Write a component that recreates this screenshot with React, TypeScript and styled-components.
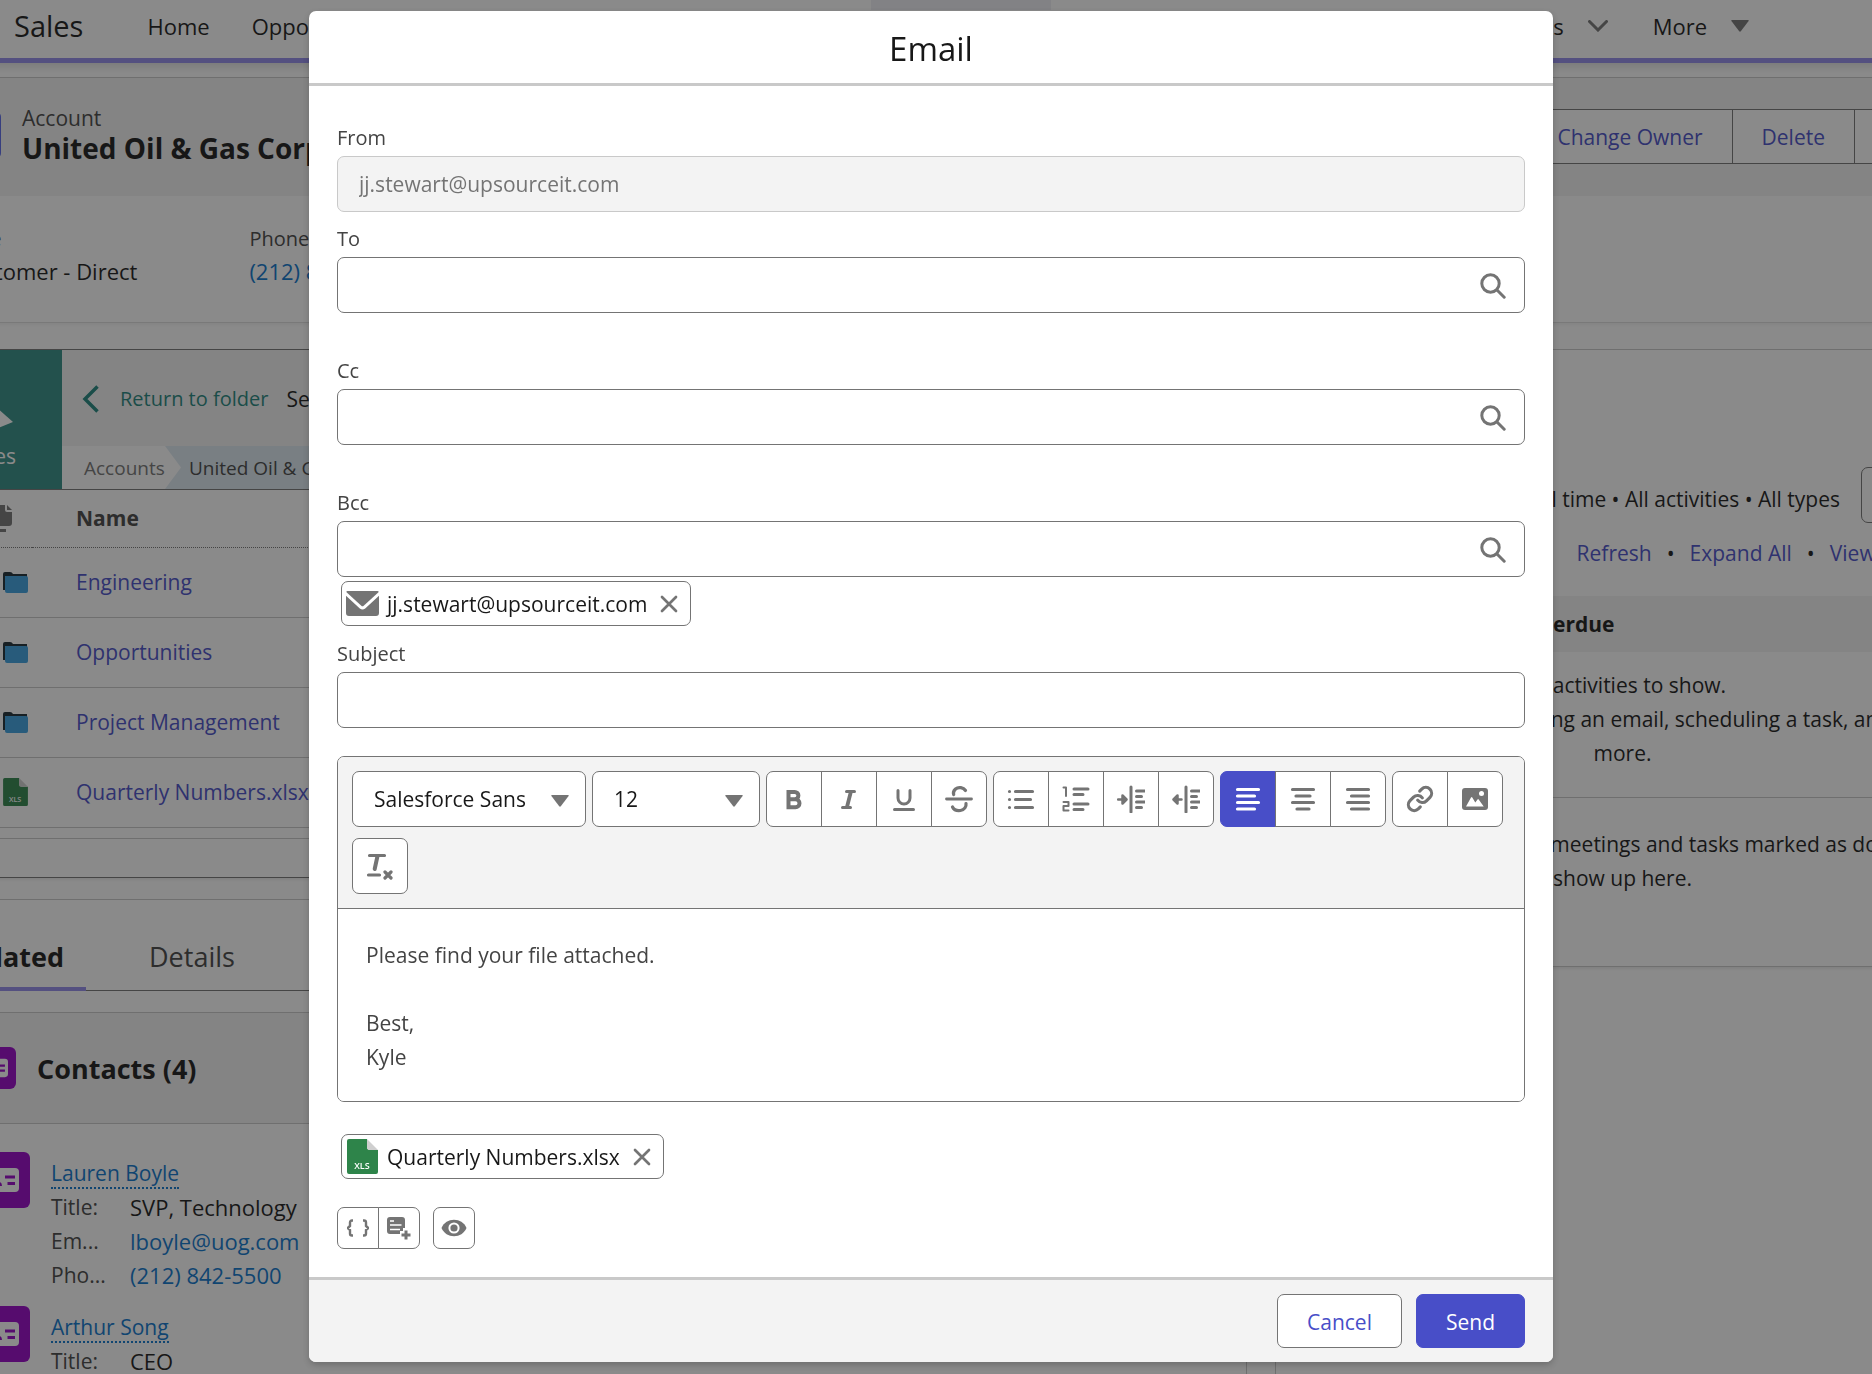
import React, { useState } from 'react';
import styled, { createGlobalStyle } from 'styled-components';
import { Link as LinkIcon } from 'lucide-react';

const font = `"Open Sans", "Noto Sans", sans-serif`;
const ink = '#181818';
const muted = '#444444';
const gray = '#747474';
const brand = '#484ec8';
const link = '#0b74cc';
const panel = '#f3f3f3';
const rule = '#c9c9c9';

const GlobalStyle = createGlobalStyle`
  *, *::before, *::after { box-sizing: border-box; }
  body {
    margin: 0;
    overflow: hidden;
    background: #fff;
    color: ${ink};
    font-family: ${font};
    font-size: 21px;
    line-height: 34px;
  }
  button, input, select, textarea { font: inherit; color: inherit; margin: 0; }
  h1, h2, p, dl, dd, dt { margin: 0; }
  a { text-decoration: none; }
  svg { display: block; flex: none; }
`;

/* ---------- record page behind the dialog ---------- */

const Viewport = styled.div`
  height: 100vh;
  overflow: hidden;
`;

const Page = styled.div`
  display: flex;
  flex-direction: column;
  min-height: 100vh;
  margin: 0 -97px 0 -60px;
`;

const TopNav = styled.nav`
  display: grid;
  grid-template-columns: minmax(0, 871fr) 180px minmax(0, 821fr);
  height: 63px;
  padding: 0 97px 0 60px;
  border-bottom: 5px solid #928aea;
  box-shadow: 0 4px 8px rgba(0, 0, 0, 0.12);
  font-size: 22px;
  white-space: nowrap;
`;

const NavStart = styled.div`
  display: flex;
  align-items: center;
  padding: 0 0 6px 14px;
  overflow: hidden;
`;

const NavEnd = styled(NavStart)`
  justify-content: flex-end;
  padding: 0 123px 6px 0;
`;

const SearchEdge = styled.div`
  height: 10px;
  background: #efeff4;
`;

const AppName = styled.span`
  font-size: 29px;
  margin-right: 64px;
`;

const NavLink = styled.a<{ $gap: number }>`
  display: flex;
  align-items: center;
  gap: 24px;
  color: ${ink};
  margin-right: ${(p) => p.$gap}px;
`;

const RecordHeader = styled.header`
  display: flex;
  align-items: flex-start;
  height: 119px;
  margin-top: 14px;
  padding: 29px 28px 0 13px;
  background: ${panel};
  border-top: 1px solid ${rule};
  white-space: nowrap;
`;

const AccountMark = styled.div`
  width: 48px;
  height: 48px;
  margin: 4px 21px 0 0;
  border-radius: 6px;
  background: #5867e8;
`;

const RecordTitle = styled.div`
  flex: 1;
`;

const Eyebrow = styled.div`
  color: ${muted};
  line-height: 22px;
`;

const RecordName = styled.h1`
  font-size: 28px;
  line-height: 38px;
  font-weight: 700;
`;

const HeaderActions = styled.div`
  display: flex;
  padding-top: 2px;
`;

const HeaderButton = styled.button<{ $width?: number }>`
  height: 55px;
  width: ${(p) => (p.$width ? `${p.$width}px` : 'auto')};
  margin-left: -1px;
  padding: 0 29px;
  background: #fff;
  border: 1px solid ${gray};
  color: ${brand};
`;

const Highlights = styled.dl`
  display: flex;
  gap: 112px;
  height: 127px;
  padding: 26px 0 0 17px;
  border-bottom: 1px solid #dcdcdc;
  box-shadow: 0 2px 3px rgba(0, 0, 0, 0.05);
  white-space: nowrap;
`;

const FieldName = styled.dt`
  font-size: 20px;
  color: ${muted};
`;

const FieldValue = styled.dd`
  line-height: 30px;
  font-size: 22px;
`;

const BlueLink = styled.a`
  color: ${link};
`;

const BrandLink = styled.a`
  color: ${brand};
`;

const Columns = styled.div`
  display: grid;
  grid-template-columns: minmax(0, 1307px) minmax(0, 1fr);
  column-gap: 28px;
  flex: 1;
  padding-top: 26px;
`;

const MainColumn = styled.main`
  border-right: 1px solid ${rule};
`;

const SideColumn = styled.aside`
  border-left: 1px solid ${rule};
`;

const FilesCard = styled.section`
  height: 529px;
  border-top: 1px solid ${gray};
  border-bottom: 1px solid ${gray};
  box-shadow: 0 2px 3px rgba(0, 0, 0, 0.08);
`;

const FilesTop = styled.div`
  display: flex;
  height: 140px;
  border-bottom: 1px solid ${gray};
`;

const FilesBadge = styled.div`
  display: flex;
  flex-direction: column;
  align-items: flex-end;
  justify-content: flex-end;
  width: 122px;
  padding: 0 46px 16px 0;
  background: #308c84;
  color: #fff;
`;

const FilesHead = styled.div`
  flex: 1;
  display: flex;
  flex-direction: column;
`;

const FilesPath = styled.div`
  display: flex;
  align-items: center;
  flex: 1;
  padding: 2px 0 0 20px;
  background: ${panel};
  white-space: nowrap;
`;

const ReturnLink = styled.a`
  display: flex;
  align-items: center;
  gap: 21px;
  margin-right: 18px;
  font-size: 20px;
  color: #1f857c;
`;

const Crumbs = styled.div`
  display: flex;
  height: 43px;
  overflow: hidden;
  background: #dde9f0;
  font-size: 19px;
  line-height: 45px;
  white-space: nowrap;
`;

const FirstCrumb = styled.a`
  width: 119px;
  padding-left: 22px;
  color: ${gray};
  background: #fff;
  clip-path: polygon(0 0, 103px 0, 100% 50%, 103px 100%, 0 100%);
`;

const Crumb = styled.a`
  padding-left: 8px;
  color: ${muted};
`;

const FileTable = styled.table`
  width: 100%;
  border-collapse: collapse;
  table-layout: fixed;
  text-align: left;
`;

const FileHeadCell = styled.th`
  height: 57px;
  padding: 0 0 0 44px;
  border-bottom: 1px dotted ${gray};
  color: ${muted};
`;

const FileCell = styled.td<{ $icon?: boolean }>`
  height: 70px;
  padding: 0 0 0 ${(p) => (p.$icon ? 63 : 44)}px;
  border-bottom: 1px solid ${rule};
  white-space: nowrap;
`;

const FileCol = styled.col<{ $w?: number }>`
  width: ${(p) => (p.$w ? `${p.$w}px` : 'auto')};
`;

const FilesFoot = styled.div`
  height: 11px;
  border-bottom: 1px solid ${rule};
`;

const TabsCard = styled.section`
  margin-top: 21px;
  border-top: 1px solid ${rule};
`;

const Tabs = styled.div`
  display: flex;
  height: 91px;
  margin-bottom: 21px;
  border-bottom: 1px solid ${gray};
`;

const Tab = styled.button<{ $active?: boolean }>`
  height: 91px;
  width: ${(p) => (p.$active ? 146 : 210)}px;
  padding: ${(p) => (p.$active ? '26px 22px 0 0' : '26px 0 0 63px')};
  border: 0;
  border-bottom: 4px solid ${(p) => (p.$active ? '#928aea' : 'transparent')};
  background: none;
  text-align: ${(p) => (p.$active ? 'right' : 'left')};
  font-size: 27px;
  font-weight: ${(p) => (p.$active ? 700 : 400)};
  color: ${(p) => (p.$active ? ink : muted)};
`;

const RelatedHead = styled.div`
  display: flex;
  align-items: center;
  gap: 21px;
  height: 112px;
  padding-left: 34px;
  background: ${panel};
  border-top: 1px solid ${rule};
  border-bottom: 1px solid ${rule};
`;

const RelatedTitle = styled.h2`
  padding-top: 2px;
  font-size: 27px;
  font-weight: 700;
`;

const ContactIconBox = styled.span<{ $size: number }>`
  display: flex;
  align-items: center;
  justify-content: center;
  flex: none;
  width: ${(p) => p.$size}px;
  height: ${(p) => p.$size}px;
  border-radius: 6px;
  background: #9602c7;
`;

const ContactRow = styled.article`
  display: flex;
  align-items: flex-start;
  gap: 21px;
  height: 154px;
  padding: 28px 0 0 34px;
`;

const ContactBody = styled.div`
  padding-top: 4px;
`;

const ContactName = styled.a`
  display: inline-block;
  line-height: 28px;
  color: ${link};
  border-bottom: 2px dotted ${link};
`;

const ContactGrid = styled.dl`
  display: grid;
  grid-template-columns: 79px auto;
`;

const ContactKey = styled.dt`
  color: ${muted};
`;

const ContactValue = styled.dd`
  font-size: 22px;
`;

const ActivityCard = styled.section`
  height: 618px;
  border-top: 1px solid ${rule};
  border-bottom: 1px solid ${rule};
  box-shadow: 0 2px 3px rgba(0, 0, 0, 0.08);
  white-space: nowrap;
`;

const FilterRow = styled.div`
  display: flex;
  align-items: center;
  justify-content: flex-end;
  gap: 21px;
  padding: 117px 52px 0 0;
`;

const FilterText = styled.span`
  padding-top: 8px;
`;

const GearButton = styled.button`
  width: 56px;
  height: 56px;
  background: #fff;
  border: 1px solid ${gray};
  border-radius: 7px;
`;

const ActivityLinks = styled.div`
  display: flex;
  justify-content: flex-end;
  gap: 15px;
  padding: 13px 64px 26px 0;
`;

const SectionBand = styled.h2`
  height: 56px;
  padding-left: 116px;
  background: ${panel};
  font-size: 21px;
  line-height: 56px;
  font-weight: 700;
`;

const EmptyNote = styled.p<{ $top: number; $bottom: number }>`
  padding: ${(p) => p.$top}px 0 ${(p) => p.$bottom}px;
  text-align: center;
`;

const Divider = styled.div`
  border-top: 1px solid ${rule};
`;

/* ---------- dialog ---------- */

const Overlay = styled.div`
  position: fixed;
  inset: 0;
  display: flex;
  padding: 11px 319px 12px 309px;
  background: rgba(22, 22, 22, 0.5);
`;

const Dialog = styled.form`
  flex: 1;
  min-width: 0;
  display: flex;
  flex-direction: column;
  border-radius: 7px;
  background: #fff;
  box-shadow: 0 3px 6px rgba(0, 0, 0, 0.2);
`;

const DialogTitle = styled.h1`
  padding: 16px 0 12px;
  border-bottom: 3px solid ${rule};
  font-size: 33px;
  line-height: 44px;
  font-weight: 400;
  text-align: center;
`;

const DialogBody = styled.div`
  flex: 1;
  padding: 38px 28px 28px;
`;

const DialogFooter = styled.div`
  display: flex;
  justify-content: flex-end;
  gap: 14px;
  padding: 14px 28px;
  border-top: 3px solid ${rule};
  border-radius: 0 0 7px 7px;
  background: ${panel};
`;

const ActionButton = styled.button<{ $primary?: boolean }>`
  height: 54px;
  padding: 2px 29px 0;
  border: 1px solid ${(p) => (p.$primary ? brand : gray)};
  border-radius: 7px;
  background: ${(p) => (p.$primary ? brand : '#fff')};
  color: ${(p) => (p.$primary ? '#fff' : brand)};
`;

const Field = styled.div<{ $after: number }>`
  display: flex;
  flex-direction: column;
  margin-bottom: ${(p) => p.$after}px;
`;

const Label = styled.label`
  align-self: flex-start;
  padding-bottom: 4px;
  font-size: 20px;
  line-height: 28px;
  color: ${muted};
`;

const InputBox = styled.div`
  display: grid;
  align-items: center;
  > * { grid-area: 1 / 1; }
  > svg { justify-self: end; margin: 2px 19px 0 0; pointer-events: none; }
`;

const TextInput = styled.input`
  width: 100%;
  height: 56px;
  padding: 0 21px;
  border: 1px solid ${gray};
  border-radius: 7px;
  background: #fff;
  &:disabled {
    background: ${panel};
    border-color: ${rule};
    color: ${gray};
  }
`;

const Pill = styled.div`
  display: flex;
  align-items: center;
  width: fit-content;
  height: 45px;
  margin-left: 4px;
  padding: 0 12px 0 4px;
  border: 1px solid ${gray};
  border-radius: 7px;
`;

const PillText = styled.span`
  margin: 0 13px 0 8px;
`;

const PillRemove = styled.button`
  padding: 0;
  border: 0;
  background: none;
`;

const BccPill = styled.div`
  padding: 4px 0 14px;
`;

const Editor = styled.div`
  overflow: hidden;
  border: 1px solid ${gray};
  border-radius: 7px;
`;

const Toolbar = styled.div`
  display: flex;
  flex-wrap: wrap;
  gap: 11px 6px;
  padding: 14px;
  border-bottom: 1px solid ${gray};
  background: ${panel};
`;

const SelectBox = styled(InputBox)<{ $width: number }>`
  width: ${(p) => p.$width}px;
  > svg { margin: 4px 17px 0 0; }
`;

const Select = styled.select`
  appearance: none;
  height: 56px;
  width: 100%;
  padding: 0 21px;
  border: 1px solid ${gray};
  border-radius: 7px;
  background: #fff;
`;

const ButtonGroup = styled.div`
  display: flex;
`;

const IconButton = styled.button<{ $size: number; $on?: boolean }>`
  display: flex;
  align-items: center;
  justify-content: center;
  width: ${(p) => p.$size}px;
  height: ${(p) => p.$size}px;
  padding: 0;
  border: 1px solid ${(p) => (p.$on ? brand : gray)};
  background: ${(p) => (p.$on ? brand : '#fff')};
  color: ${(p) => (p.$on ? '#fff' : gray)};
  &:not(:first-child) { margin-left: -1px; }
  &:first-child { border-radius: 7px 0 0 7px; }
  &:last-child { border-radius: 0 7px 7px 0; }
  &:only-child { border-radius: 7px; }
`;

const Message = styled.textarea`
  display: block;
  width: 100%;
  padding: 29px 28px 27px;
  border: 0;
  resize: none;
  color: ${muted};
  line-height: 34px;
`;

const Attachment = styled.div`
  padding: 32px 0 28px;
`;

const SmallTools = styled.div`
  display: flex;
  gap: 13px;
`;

/* ---------- icons ---------- */

const Glyph = ({ children }: { children: React.ReactNode }) => (
  <svg width="28" height="28" viewBox="0 0 28 28" fill="none" stroke="currentColor" strokeLinecap="round" strokeLinejoin="round" aria-hidden="true">
    {children}
  </svg>
);

const SearchIcon = () => (
  <svg width="26" height="26" viewBox="0 0 26 26" fill="none" stroke={gray} strokeWidth="3" strokeLinecap="round" aria-hidden="true">
    <circle cx="10.5" cy="10.5" r="8.7" />
    <path d="M17 17l7.2 7.2" />
  </svg>
);

const Triangle = () => (
  <svg width="18" height="12" viewBox="0 0 18 12" aria-hidden="true">
    <path d="M1 0h16q1.3 0 .6 1L10 11q-1 1.3-2 0L.4 1Q-.3 0 1 0z" fill={gray} />
  </svg>
);

const CrossIcon = () => (
  <svg width="18" height="18" viewBox="0 0 18 18" stroke={gray} strokeWidth="2.7" strokeLinecap="round" aria-hidden="true">
    <path d="M2 2l14 14M16 2L2 16" />
  </svg>
);

const MailIcon = () => (
  <svg width="33" height="25" viewBox="0 0 33 25" fill={gray} aria-hidden="true">
    <path d="M1.5 0h30q1.500 0 1 1.200L17.700 14.800q-1.200 1-2.400 0L.5 1.200Q0 0 1.500 0z" />
    <path d="M0 4.800l13.800 12.700q2.700 2.200 5.400 0L33 4.800V22q0 3-3 3H3q-3 0-3-3z" />
  </svg>
);

const XlsIcon = ({ w = 31, h = 35 }: { w?: number; h?: number }) => (
  <svg width={w} height={h} viewBox="0 0 31 35" aria-hidden="true">
    <path d="M2 0h18v8q0 3 3 3h8v22q0 2-2 2H2q-2 0-2-2V2q0-2 2-2z" fill="#2e844a" />
    <path d="M20 0l11 11h-8q-3 0-3-3z" fill="#cfcfcf" />
    <text x="15" y="30" textAnchor="middle" fontSize="9" fontWeight="600" fontFamily="Open Sans, sans-serif" fill="#fff">XLS</text>
  </svg>
);

const FolderIcon = () => (
  <svg width="25" height="21" viewBox="0 0 25 21" aria-hidden="true">
    <path d="M0 2q0-2 2-2h5q2 0 3 2h14v16H0z" fill="#1a2a33" />
    <path d="M2 4h21q2 0 2 2v13q0 2-2 2H4q-2 0-2-2z" fill="#3aa0e0" />
  </svg>
);

const ContactIcon = ({ size }: { size: number }) => (
  <svg width={size} height={size} viewBox="0 0 34 34" aria-hidden="true">
    <rect x="0" y="5" width="34" height="24" rx="4" fill="#fff" />
    <circle cx="10.5" cy="14" r="4" fill="#9602c7" />
    <path d="M4 23q0-5 6.500-5t6.500 5z" fill="#9602c7" />
    <path d="M20 14h10M22.500 20.500H30" stroke="#9602c7" strokeWidth="3" />
  </svg>
);

const BoldIcon = () => (
  <Glyph>
    <path strokeWidth="4" strokeLinejoin="miter" d="M8.500 6.900h6.200a3.700 3.700 0 0 1 0 7.400H8.500zM8.500 14.300h7a4 4 0 0 1 0 8h-7z" />
  </Glyph>
);
const ItalicIcon = () => (
  <Glyph>
    <path strokeWidth="3" d="M11.500 6.500h8M7.500 22.500h8" />
    <path strokeWidth="3.800" d="M15.800 7l-3.800 15" />
  </Glyph>
);
const UnderlineIcon = () => (
  <Glyph>
    <path strokeWidth="3" d="M8 5.500v7.500a6 6 0 0 0 12 0V5.500M4.500 24.500h19" />
  </Glyph>
);
const StrikeIcon = () => (
  <Glyph>
    <path strokeWidth="2.800" d="M1.500 14h25" />
    <path strokeWidth="3.200" d="M20.500 5.500C18.500 2.500 13.500 1.500 10.500 4 8.500 6 8 8 8.700 9.500M21 18.500c.5 3-1.500 6.500-5.500 7-4 .5-6.800-1-8-3.500" />
  </Glyph>
);
const BulletIcon = () => (
  <Glyph>
    <path strokeWidth="3.200" d="M2.500 6.500h0M2.500 14.500h0M2.500 22.500h0M8.500 6.500h17M8.500 14.500h15M8.500 22.500h17" />
  </Glyph>
);
const NumberIcon = () => (
  <Glyph>
    <path strokeWidth="2" d="M1.500 2.500H4V11M1.500 17h5v4h-5v4.500h5" />
    <path strokeWidth="3" d="M12 4h14M12 9.500h9M12 19h14M12 24.500h9" />
  </Glyph>
);
const IndentIcon = () => (
  <Glyph>
    <path strokeWidth="3" d="M14 2v25M19.500 6h8M19.500 11.500h5M19.500 17h8M19.500 22.500h5" />
    <path strokeWidth="2.500" d="M1 14.500h6M5.500 10.500l4 4-4 4z" fill="currentColor" />
  </Glyph>
);
const OutdentIcon = () => (
  <Glyph>
    <path strokeWidth="3" d="M14 2v25M19.500 6h8M19.500 11.500h5M19.500 17h8M19.500 22.500h5" />
    <path strokeWidth="2.500" d="M3.500 14.500h6M5.500 10.500l-4 4 4 4z" fill="currentColor" />
  </Glyph>
);
const AlignIcon = ({ d }: { d: string }) => (
  <Glyph>
    <path strokeWidth="3.200" d={d} />
  </Glyph>
);
const ImageIcon = () => (
  <Glyph>
    <rect x="1" y="3" width="26" height="22" rx="3" fill="currentColor" stroke="none" />
    <path d="M5 21.500l5-9q.6-1 1.300 0l3 5 2.200-3q.6-.8 1.200 0l5 7z" fill="#fff" stroke="none" />
    <circle cx="20.5" cy="8.5" r="2.5" fill="#fff" stroke="none" />
  </Glyph>
);
const ClearIcon = () => (
  <Glyph>
    <path strokeWidth="3.200" d="M3.500 3.500h15M2.500 23h11" />
    <path strokeWidth="4" d="M11.500 4l-2.800 13" />
    <path strokeWidth="3.200" d="M19 20l6 6M25 20l-6 6" />
  </Glyph>
);
const BracesIcon = () => (
  <svg width="22" height="18" viewBox="0 0 22 18" fill="none" stroke="currentColor" strokeWidth="2.4" aria-hidden="true">
    <path d="M6 1.500H5q-2 0-2 2v3.500L.8 9 3 11v3.500q0 2 2 2h1M16 1.500h1q2 0 2 2v3.500l2.200 2-2.200 2v3.500q0 2-2 2h-1" />
  </svg>
);
const TemplateIcon = () => (
  <svg width="24" height="24" viewBox="0 0 24 24" fill="currentColor" aria-hidden="true">
    <path d="M3 1h12q3 0 3 3v8h-2v3h-3v3H3q-3 0-3-3V4q0-3 3-3z" />
    <path d="M3 5h4M3 9h11.500M3 13.500h10" stroke="#fff" strokeWidth="1.7" />
    <path d="M19 14.500v9M14.500 19h9" stroke="currentColor" strokeWidth="3" />
  </svg>
);
const EyeIcon = () => (
  <svg width="26" height="18" viewBox="0 0 26 18" aria-hidden="true">
    <path d="M.5 9C3 3.500 7.500.8 13 .8S23 3.500 25.500 9C23 14.500 18.500 17.200 13 17.200S3 14.500.5 9z" fill={gray} />
    <circle cx="13" cy="9" r="4.6" fill={gray} stroke="#fff" strokeWidth="2" />
  </svg>
);

/* ---------- content ---------- */

const folders = ['Engineering', 'Opportunities', 'Project Management'];

const contacts = [
  { name: 'Lauren Boyle', title: 'SVP, Technology', email: 'lboyle@uog.com', phone: '(212) 842-5500' },
  { name: 'Arthur Song', title: 'CEO', email: 'asong@uog.com', phone: '(212) 842-5500' },
];

const RecordPage = () => (
  <Page>
    <TopNav>
      <NavStart>
        <AppName>Sales</AppName>
        <NavLink href="#" $gap={42}>Home</NavLink>
        <NavLink href="#" $gap={0}>Opportunities</NavLink>
      </NavStart>
      <SearchEdge />
      <NavEnd>
        <NavLink href="#" $gap={45}>
          Proposals
          <svg width="20" height="12" viewBox="0 0 20 12" fill="none" stroke={gray} strokeWidth="3" strokeLinecap="round" aria-hidden="true">
            <path d="M1.500 1.500L10 10l8.500-8.500" />
          </svg>
        </NavLink>
        <NavLink href="#" $gap={0}>
          More
          <Triangle />
        </NavLink>
      </NavEnd>
    </TopNav>

    <RecordHeader>
      <AccountMark />
      <RecordTitle>
        <Eyebrow>Account</Eyebrow>
        <RecordName>United Oil &amp; Gas Corp.</RecordName>
      </RecordTitle>
      <HeaderActions>
        <HeaderButton type="button">Change Owner</HeaderButton>
        <HeaderButton type="button">Delete</HeaderButton>
        <HeaderButton type="button" $width={87} aria-label="More actions" />
      </HeaderActions>
    </RecordHeader>

    <Highlights>
      <div>
        <FieldName>Type</FieldName>
        <FieldValue>Customer - Direct</FieldValue>
      </div>
      <div>
        <FieldName>Phone</FieldName>
        <FieldValue><BlueLink href="#">(212) 842-5500</BlueLink></FieldValue>
      </div>
    </Highlights>

    <Columns>
      <MainColumn>
        <FilesCard>
          <FilesTop>
            <FilesBadge>
              <svg width="60" height="50" viewBox="0 0 60 50" aria-hidden="true">
                <path d="M20 0L57 33 20 48z" fill="#fff" />
              </svg>
              Files
            </FilesBadge>
            <FilesHead>
              <FilesPath>
                <ReturnLink href="#">
                  <svg width="17" height="28" viewBox="0 0 17 28" fill="none" stroke="#1f857c" strokeWidth="3.5" aria-hidden="true">
                    <path d="M15.500 1.500L3 14l12.500 12.500" />
                  </svg>
                  Return to folder
                </ReturnLink>
                Search
              </FilesPath>
              <Crumbs>
                <FirstCrumb href="#">Accounts</FirstCrumb>
                <Crumb href="#">United Oil &amp; Gas Corp.</Crumb>
              </Crumbs>
            </FilesHead>
          </FilesTop>
          <FileTable>
            <colgroup>
              <FileCol $w={92} />
              <FileCol />
            </colgroup>
            <thead>
              <tr>
                <FileHeadCell>
                  <svg width="28" height="27" viewBox="0 0 28 27" fill={gray} aria-label="Type">
                    <path d="M8 0h13v5q0 2 2 2h5v11q0 3-3 3H8zM23 0l5 5h-5zM4 24h18v3H4z" />
                  </svg>
                </FileHeadCell>
                <FileHeadCell>Name</FileHeadCell>
              </tr>
            </thead>
            <tbody>
              {folders.map((name) => (
                <tr key={name}>
                  <FileCell $icon><FolderIcon /></FileCell>
                  <FileCell><BrandLink href="#">{name}</BrandLink></FileCell>
                </tr>
              ))}
              <tr>
                <FileCell $icon><XlsIcon w={25} h={28} /></FileCell>
                <FileCell><BrandLink href="#">Quarterly Numbers.xlsx</BrandLink></FileCell>
              </tr>
            </tbody>
          </FileTable>
          <FilesFoot />
        </FilesCard>

        <TabsCard>
          <Tabs>
            <Tab type="button" $active>Related</Tab>
            <Tab type="button">Details</Tab>
          </Tabs>
          <RelatedHead>
            <ContactIconBox $size={42}><ContactIcon size={26} /></ContactIconBox>
            <RelatedTitle>Contacts (4)</RelatedTitle>
          </RelatedHead>
          {contacts.map((c) => (
            <ContactRow key={c.name}>
              <ContactIconBox $size={56}><ContactIcon size={34} /></ContactIconBox>
              <ContactBody>
                <ContactName href="#">{c.name}</ContactName>
                <ContactGrid>
                  <ContactKey>Title:</ContactKey>
                  <ContactValue>{c.title}</ContactValue>
                  <ContactKey>Em...</ContactKey>
                  <ContactValue><BlueLink href="#">{c.email}</BlueLink></ContactValue>
                  <ContactKey>Pho...</ContactKey>
                  <ContactValue><BlueLink href="#">{c.phone}</BlueLink></ContactValue>
                </ContactGrid>
              </ContactBody>
            </ContactRow>
          ))}
        </TabsCard>
      </MainColumn>

      <SideColumn>
        <ActivityCard>
          <FilterRow>
            <FilterText>Filters: All time • All activities • All types</FilterText>
            <GearButton type="button" aria-label="Filter settings" />
          </FilterRow>
          <ActivityLinks>
            <BrandLink href="#">Refresh</BrandLink>
            <span>•</span>
            <BrandLink href="#">Expand All</BrandLink>
            <span>•</span>
            <BrandLink href="#">View All</BrandLink>
          </ActivityLinks>
          <SectionBand>Upcoming &amp; Overdue</SectionBand>
          <EmptyNote $top={16} $bottom={27}>
            No activities to show.
            <br />
            Get started by sending an email, scheduling a task, and
            <br />
            more.
          </EmptyNote>
          <Divider />
          <EmptyNote $top={29} $bottom={0}>
            No past activity. Past meetings and tasks marked as done
            <br />
            show up here.
          </EmptyNote>
        </ActivityCard>
      </SideColumn>
    </Columns>
  </Page>
);

const RecipientField = ({ id, label, after }: { id: string; label: string; after: number }) => (
  <Field $after={after}>
    <Label htmlFor={id}>{label}</Label>
    <InputBox>
      <TextInput id={id} type="text" />
      <SearchIcon />
    </InputBox>
  </Field>
);

const EmailDialog = () => {
  const [message, setMessage] = useState('Please find your file attached.\n\nBest,\nKyle');
  const [align, setAlign] = useState('left');
  const alignments = [
    { id: 'left', d: 'M3.500 4.500h21M3.500 11h17M3.500 17.500h21M3.500 24h17' },
    { id: 'center', d: 'M3.500 4.500h21M7 11h14M3.500 17.500h21M8 24h12' },
    { id: 'right', d: 'M3.500 4.500h21M7.500 11h17M3.500 17.500h21M7.500 24h17' },
  ];

  return (
    <Overlay>
      <Dialog role="dialog" aria-modal="true" aria-labelledby="email-title" onSubmit={(e) => e.preventDefault()}>
        <DialogTitle id="email-title">Email</DialogTitle>
        <DialogBody>
          <Field $after={13}>
            <Label htmlFor="from">From</Label>
            <TextInput id="from" type="email" defaultValue="jj.stewart@upsourceit.com" disabled />
          </Field>
          <RecipientField id="to" label="To" after={44} />
          <RecipientField id="cc" label="Cc" after={44} />
          <RecipientField id="bcc" label="Bcc" after={0} />
          <BccPill>
            <Pill>
              <MailIcon />
              <PillText>jj.stewart@upsourceit.com</PillText>
              <PillRemove type="button" aria-label="Remove recipient"><CrossIcon /></PillRemove>
            </Pill>
          </BccPill>
          <Field $after={28}>
            <Label htmlFor="subject">Subject</Label>
            <TextInput id="subject" type="text" />
          </Field>

          <Editor>
            <Toolbar>
              <SelectBox $width={234}>
                <Select aria-label="Font">
                  <option>Salesforce Sans</option>
                </Select>
                <Triangle />
              </SelectBox>
              <SelectBox $width={168}>
                <Select aria-label="Font size">
                  <option>12</option>
                </Select>
                <Triangle />
              </SelectBox>
              <ButtonGroup>
                <IconButton type="button" $size={56} aria-label="Bold"><BoldIcon /></IconButton>
                <IconButton type="button" $size={56} aria-label="Italic"><ItalicIcon /></IconButton>
                <IconButton type="button" $size={56} aria-label="Underline"><UnderlineIcon /></IconButton>
                <IconButton type="button" $size={56} aria-label="Strikethrough"><StrikeIcon /></IconButton>
              </ButtonGroup>
              <ButtonGroup>
                <IconButton type="button" $size={56} aria-label="Bulleted list"><BulletIcon /></IconButton>
                <IconButton type="button" $size={56} aria-label="Numbered list"><NumberIcon /></IconButton>
                <IconButton type="button" $size={56} aria-label="Indent"><IndentIcon /></IconButton>
                <IconButton type="button" $size={56} aria-label="Outdent"><OutdentIcon /></IconButton>
              </ButtonGroup>
              <ButtonGroup>
                {alignments.map((a) => (
                  <IconButton key={a.id} type="button" $size={56} $on={align === a.id} aria-label={`Align ${a.id}`} onClick={() => setAlign(a.id)}>
                    <AlignIcon d={a.d} />
                  </IconButton>
                ))}
              </ButtonGroup>
              <ButtonGroup>
                <IconButton type="button" $size={56} aria-label="Link"><LinkIcon size={28} strokeWidth={2.7} /></IconButton>
                <IconButton type="button" $size={56} aria-label="Image"><ImageIcon /></IconButton>
              </ButtonGroup>
              <ButtonGroup>
                <IconButton type="button" $size={56} aria-label="Remove formatting"><ClearIcon /></IconButton>
              </ButtonGroup>
            </Toolbar>
            <Message aria-label="Message" rows={4} value={message} onChange={(e) => setMessage(e.target.value)} />
          </Editor>

          <Attachment>
            <Pill>
              <XlsIcon w={33} h={35} />
              <PillText>Quarterly Numbers.xlsx</PillText>
              <PillRemove type="button" aria-label="Remove attachment"><CrossIcon /></PillRemove>
            </Pill>
          </Attachment>

          <SmallTools>
            <ButtonGroup>
              <IconButton type="button" $size={42} aria-label="Insert merge field"><BracesIcon /></IconButton>
              <IconButton type="button" $size={42} aria-label="Insert template"><TemplateIcon /></IconButton>
            </ButtonGroup>
            <ButtonGroup>
              <IconButton type="button" $size={42} aria-label="Preview"><EyeIcon /></IconButton>
            </ButtonGroup>
          </SmallTools>
        </DialogBody>
        <DialogFooter>
          <ActionButton type="button">Cancel</ActionButton>
          <ActionButton type="submit" $primary>Send</ActionButton>
        </DialogFooter>
      </Dialog>
    </Overlay>
  );
};

export default function App() {
  return (
    <>
      <GlobalStyle />
      <Viewport>
        <RecordPage />
      </Viewport>
      <EmailDialog />
    </>
  );
}
